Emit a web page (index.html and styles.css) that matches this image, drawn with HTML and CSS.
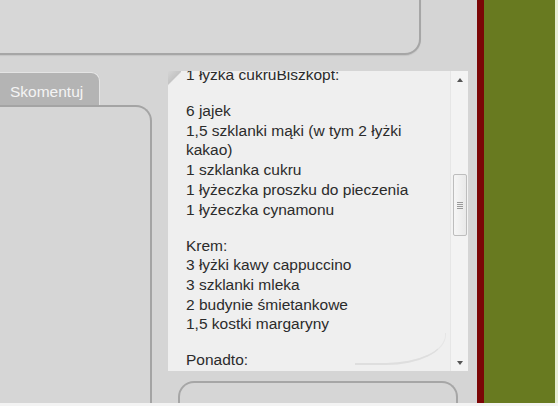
FILE: index.html
```html
<!DOCTYPE html>
<html lang="pl">
<head>
<meta charset="utf-8">
<link rel="stylesheet" href="styles.css">
</head>
<body>
<div class="page">
  <div class="main">
    <div class="top-panel"></div>
    <div class="row">
      <div class="left">
        <div class="tab">Skomentuj</div>
        <div class="left-panel"></div>
      </div>
      <div class="mid">
        <div class="textbox">
          <div class="content">
            <p>1 łyżka cukruBiszkopt:</p>
            <p>6 jajek<br>1,5 szklanki mąki (w tym 2 łyżki<br>kakao)<br>1 szklanka cukru<br>1 łyżeczka proszku do pieczenia<br>1 łyżeczka cynamonu</p>
            <p>Krem:<br>3 łyżki kawy cappuccino<br>3 szklanki mleka<br>2 budynie śmietankowe<br>1,5 kostki margaryny</p>
            <p>Ponadto:</p>
          </div>
          <div class="scrollbar">
            <div class="arrow arrow-up"></div>
            <div class="track">
              <div class="thumb"><span class="grip"></span></div>
            </div>
            <div class="arrow arrow-down"></div>
          </div>
        </div>
        <div class="bottom-panel"></div>
      </div>
    </div>
  </div>
  <div class="red"></div>
  <div class="green"></div>
  <div class="edge"></div>
</div>
<div class="foot"></div>
</body>
</html>
```

FILE: styles.css
```css
html, body {
  margin: 0;
  padding: 0;
  background: #f4f4f4;
  overflow: hidden;
  font-family: "Liberation Sans", Arial, sans-serif;
}

.page {
  display: flex;
  height: 403px;
  background: #d5d5d5;
  overflow: hidden;
}

.main {
  width: 477px;
  flex: none;
  display: flex;
  flex-direction: column;
}

.top-panel {
  flex: none;
  box-sizing: border-box;
  width: 441px;
  height: 75px;
  margin: -20px 0 0 -20px;
  border: 2px solid #a6a6a6;
  border-radius: 16px;
  background: #d7d7d7;
  box-shadow: 0 1px 1px rgba(0,0,0,0.08);
}

.row {
  flex: 1;
  display: flex;
  min-height: 0;
}

.left {
  width: 152px;
  flex: none;
  display: flex;
  flex-direction: column;
  padding-top: 17px;
}

.tab {
  box-sizing: border-box;
  width: 100px;
  height: 33px;
  padding: 11px 0 0 10px;
  background: #b4b4b4;
  border-top-right-radius: 8px;
  box-shadow: inset -1px 1px 0 #e4e4e4;
  color: #f4f4f4;
  font-size: 15.5px;
  line-height: normal;
}

.left-panel {
  flex: 1;
  box-sizing: border-box;
  width: 172px;
  margin-left: -20px;
  border: 2px solid #a4a4a4;
  border-bottom: none;
  border-top-right-radius: 16px;
  background: #d6d6d6;
}

.mid {
  width: 300px;
  flex: none;
  margin-left: 16px;
  padding-top: 16px;
  display: flex;
  flex-direction: column;
}

.textbox {
  position: relative;
  height: 300px;
  flex: none;
  display: flex;
  background: #efefef;
  overflow: hidden;
}

.textbox::before {
  content: "";
  position: absolute;
  left: 0;
  top: 0;
  width: 13px;
  height: 16px;
  background: linear-gradient(135deg, #d5d5d5 0%, #c4c4c4 45%, rgba(239,239,239,0) 52%);
}

.textbox::after {
  content: "";
  position: absolute;
  right: 22px;
  bottom: 6px;
  width: 90px;
  height: 30px;
  border-bottom: 2px solid rgba(0,0,0,0.07);
  border-right: 1px solid rgba(0,0,0,0.04);
  border-bottom-right-radius: 60px 30px;
}

.content {
  flex: 1;
  padding-left: 18px;
  margin-top: -6px;
  color: #2b2b2b;
  font-size: 15.5px;
  line-height: 19.7px;
  white-space: nowrap;
}

.content p {
  margin: 0 0 16.3px;
}

.scrollbar {
  width: 17px;
  flex: none;
  display: flex;
  flex-direction: column;
  background: #f3f3f3;
  border-left: 1px solid #e6e6e6;
}

.arrow {
  height: 17px;
  flex: none;
  display: flex;
  align-items: center;
  justify-content: center;
}

.arrow::before {
  content: "";
  width: 0;
  height: 0;
  border-left: 3.5px solid transparent;
  border-right: 3.5px solid transparent;
}

.arrow-up::before {
  border-bottom: 4px solid #555;
}

.arrow-down::before {
  border-top: 4px solid #555;
}

.track {
  flex: 1;
  display: flex;
  flex-direction: column;
  align-items: center;
}

.thumb {
  box-sizing: border-box;
  width: 14px;
  height: 62px;
  margin-top: 86px;
  border: 1px solid #bdbdbd;
  border-radius: 2px;
  background: linear-gradient(90deg, #f6f6f6, #e9e9e9);
  display: flex;
  align-items: center;
  justify-content: center;
}

.grip {
  width: 6px;
  height: 7px;
  background: repeating-linear-gradient(180deg, #9a9a9a 0 1px, transparent 1px 2px);
}

.bottom-panel {
  flex: 1;
  box-sizing: border-box;
  margin: 10px 10px 0;
  border: 2px solid #a6a6a6;
  border-bottom: none;
  border-radius: 16px 16px 0 0;
  background: #d6d6d6;
}

.red {
  width: 7px;
  flex: none;
  background: #7b0606;
}

.green {
  width: 71px;
  flex: none;
  background: #687a20;
}

.edge {
  flex: 1;
  background: #e6ecd6;
}

.foot {
  height: 3px;
  background: #f4f4f4;
}
```
